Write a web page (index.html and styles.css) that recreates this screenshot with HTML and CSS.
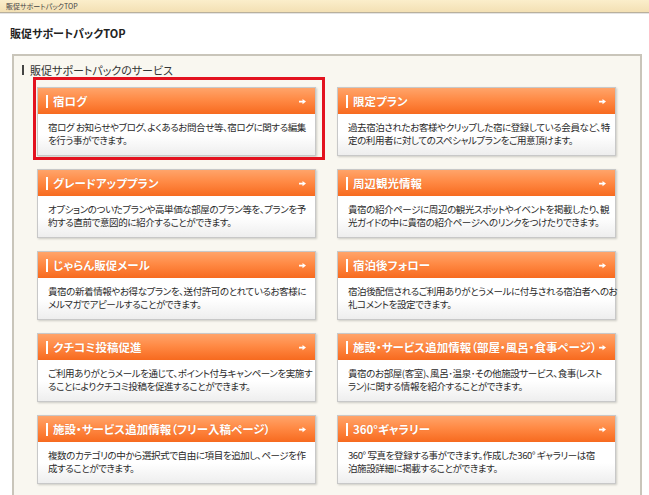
FILE: index.html
```html
<!DOCTYPE html>
<html lang="ja">
<head>
<meta charset="utf-8">
<title>販促サポートパックTOP</title>
<link rel="stylesheet" href="styles.css">
</head>
<body>
<div class="topbar">販促サポートパックTOP</div>
<h1 class="page-title">販促サポートパックTOP</h1>
<div class="panel">
  <h2 class="panel-head">販促サポートパックのサービス</h2>
  <div class="grid">
    <div class="card selected">
      <div class="card-head"><span class="card-title">宿ログ</span><svg class="arrow" viewBox="0 0 8 8"><path d="M0 3h4V1l4 3-4 3V5H0z" fill="#fff"/></svg></div>
      <div class="card-body">宿ログ お知らせやブログ、よくあるお問合せ等、宿ログに関する編集<br>を行う事ができます。</div>
    </div>
    <div class="card">
      <div class="card-head"><span class="card-title">限定プラン</span><svg class="arrow" viewBox="0 0 8 8"><path d="M0 3h4V1l4 3-4 3V5H0z" fill="#fff"/></svg></div>
      <div class="card-body">過去宿泊されたお客様やクリップした宿に登録している会員など、特<br>定の利用者に対してのスペシャルプランをご用意頂けます。</div>
    </div>
    <div class="card">
      <div class="card-head"><span class="card-title">グレードアッププラン</span><svg class="arrow" viewBox="0 0 8 8"><path d="M0 3h4V1l4 3-4 3V5H0z" fill="#fff"/></svg></div>
      <div class="card-body">オプションのついたプランや高単価な部屋のプラン等を、プランを予<br>約する直前で意図的に紹介することができます。</div>
    </div>
    <div class="card">
      <div class="card-head"><span class="card-title">周辺観光情報</span><svg class="arrow" viewBox="0 0 8 8"><path d="M0 3h4V1l4 3-4 3V5H0z" fill="#fff"/></svg></div>
      <div class="card-body">貴宿の紹介ページに周辺の観光スポットやイベントを掲載したり、観<br>光ガイドの中に貴宿の紹介ページへのリンクをつけたりできます。</div>
    </div>
    <div class="card">
      <div class="card-head"><span class="card-title">じゃらん販促メール</span><svg class="arrow" viewBox="0 0 8 8"><path d="M0 3h4V1l4 3-4 3V5H0z" fill="#fff"/></svg></div>
      <div class="card-body">貴宿の新着情報やお得なプランを、送付許可のとれているお客様に<br>メルマガでアピールすることができます。</div>
    </div>
    <div class="card">
      <div class="card-head"><span class="card-title">宿泊後フォロー</span><svg class="arrow" viewBox="0 0 8 8"><path d="M0 3h4V1l4 3-4 3V5H0z" fill="#fff"/></svg></div>
      <div class="card-body">宿泊後配信されるご利用ありがとうメールに付与される宿泊者へのお<br>礼コメントを設定できます。</div>
    </div>
    <div class="card">
      <div class="card-head"><span class="card-title">クチコミ投稿促進</span><svg class="arrow" viewBox="0 0 8 8"><path d="M0 3h4V1l4 3-4 3V5H0z" fill="#fff"/></svg></div>
      <div class="card-body">ご利用ありがとうメールを通じて、ポイント付与キャンペーンを実施す<br>ることによりクチコミ投稿を促進することができます。</div>
    </div>
    <div class="card">
      <div class="card-head"><span class="card-title">施設・サービス追加情報（部屋・風呂・食事ページ）</span><svg class="arrow" viewBox="0 0 8 8"><path d="M0 3h4V1l4 3-4 3V5H0z" fill="#fff"/></svg></div>
      <div class="card-body">貴宿のお部屋(客室)、風呂･温泉･その他施設サービス、食事(レスト<br>ラン)に関する情報を紹介することができます。</div>
    </div>
    <div class="card">
      <div class="card-head"><span class="card-title">施設・サービス追加情報（フリー入稿ページ）</span><svg class="arrow" viewBox="0 0 8 8"><path d="M0 3h4V1l4 3-4 3V5H0z" fill="#fff"/></svg></div>
      <div class="card-body">複数のカテゴリの中から選択式で自由に項目を追加し、ページを作<br>成することができます。</div>
    </div>
    <div class="card">
      <div class="card-head"><span class="card-title">360°ギャラリー</span><svg class="arrow" viewBox="0 0 8 8"><path d="M0 3h4V1l4 3-4 3V5H0z" fill="#fff"/></svg></div>
      <div class="card-body">360°&nbsp;写真を登録する事ができます。作成した360°&nbsp;ギャラリーは宿<br>泊施設詳細に掲載することができます。</div>
    </div>
  </div>
</div>
</body>
</html>
```

FILE: styles.css
```css
html, body {
  margin: 0;
  padding: 0;
  background: #fff;
}
body {
  font-family: "Noto Sans CJK JP", "Noto Sans", sans-serif;
  color: #333;
  font-feature-settings: "palt";
}
.topbar {
  height: 12px;
  line-height: 12px;
  font-size: 7px;
  padding-left: 6px;
  color: #444;
  background: linear-gradient(#fbeecb, #f3e0b4);
  border-bottom: 1px solid #b9b09c;
  box-shadow: 0 1px 0 #e4e4e4;
}
.page-title {
  margin: 0;
  padding: 13px 0 0 10px;
  height: 28px;
  line-height: 14px;
  font-size: 11px;
  font-weight: bold;
  color: #222;
}
.panel {
  margin-left: 12px;
  width: 626px;
  height: 460px;
  border: 2px solid #c9c5ba;
  background: #f9f7f0;
}
.panel-head {
  margin: 0 0 7px 0;
  padding: 4px 0 0 8px;
  height: 20px;
  display: flex;
  align-items: center;
  gap: 6px;
  font-size: 11px;
  font-weight: normal;
  line-height: 14px;
  color: #333;
}
.panel-head::before {
  content: "";
  width: 2px;
  height: 10px;
  background: #444;
}
.grid {
  display: grid;
  grid-template-columns: 279px 279px;
  column-gap: 21px;
  row-gap: 13px;
  padding: 0 0 0 23px;
}
.card {
  position: relative;
  height: 69px;
  box-sizing: border-box;
  border: 1px solid #c8c8c8;
  background: linear-gradient(#fff 70%, #eeeeee);
  box-shadow: 1px 1px 2px rgba(0, 0, 0, 0.18);
}
.card.selected::after {
  content: "";
  position: absolute;
  top: -11px;
  left: -5px;
  right: -10px;
  bottom: -5px;
  border: 3px solid #e3121f;
}
.card-head {
  height: 26px;
  display: flex;
  align-items: center;
  padding: 0 9px 0 8px;
  background: linear-gradient(#ffa46a, #ff8a45 45%, #f76a1f);
  color: #fff;
}
.card-title {
  flex: 1;
  display: flex;
  align-items: center;
  gap: 5px;
  font-size: 11.5px;
  font-weight: bold;
  white-space: nowrap;
  text-shadow: 0 0 1px rgba(180, 60, 0, 0.4);
}
.card-title::before {
  content: "";
  width: 2px;
  height: 13px;
  background: #fff;
}
.arrow {
  width: 7px;
  height: 7px;
  flex: none;
}
.card-body {
  padding: 7px 10px 0 10px;
  font-size: 9.5px;
  letter-spacing: -0.4px;
  line-height: 13px;
  color: #2a2a2a;
  white-space: nowrap;
}
```
